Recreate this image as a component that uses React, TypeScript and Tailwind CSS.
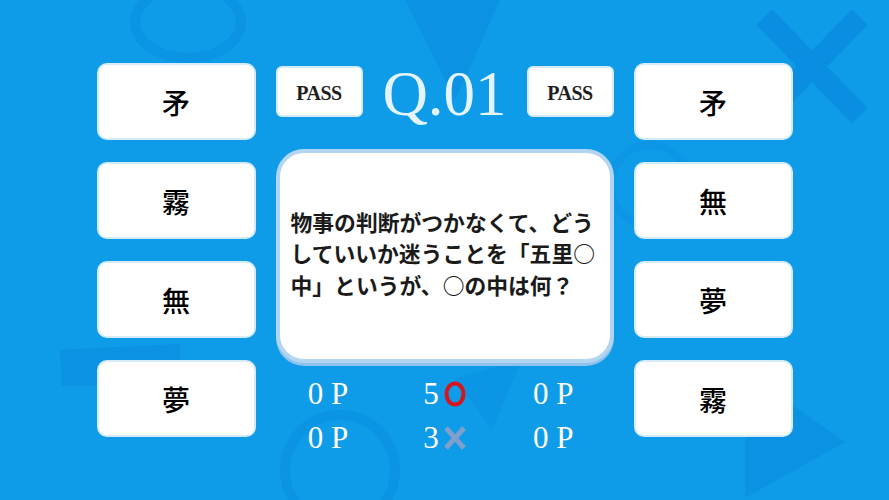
import React from "react";

const FONT = "font-['Liberation_Serif','Noto_Sans_CJK_JP',serif]";
const CJK = "font-['Noto_Sans_CJK_JP',sans-serif]";
const LEFT = ["矛", "霧", "無", "夢"];
const RIGHT = ["矛", "無", "夢", "霧"];
const QUESTION = [
  "物事の判断がつかなくて、どう",
  "していいか迷うことを「五里○",
  "中」というが、○の中は何？",
];

function Backdrop() {
  return (
    <svg
      className="absolute inset-0 h-full w-full"
      viewBox="0 0 889 500"
      aria-hidden
    >
      <ellipse cx="188" cy="22" rx="53" ry="36" fill="none" stroke="#0b93e4" strokeWidth="10" />
      <polygon points="405,0 500,0 455,100" fill="#0b92e3" />
      <g stroke="#0a8ee1" strokeWidth="22" strokeLinecap="square">
        <line x1="772" y1="25" x2="852" y2="108" />
        <line x1="852" y1="25" x2="772" y2="108" />
      </g>
      <circle cx="340" cy="470" r="55" fill="none" stroke="#0b93e4" strokeWidth="10" />
      <polygon points="745,372 845,442 745,498" fill="#0b92e3" />
      <polygon points="60,350 180,344 180,386 62,386" fill="#0b92e3" />
      <polygon points="455,378 522,360 492,430" fill="#0c95e5" />
      <circle cx="650" cy="185" r="40" fill="none" stroke="#0c96e5" strokeWidth="8" />
    </svg>
  );
}

function AnswerCard({ label }: { label: string }) {
  return (
    <div className="flex h-[77px] w-[159px] items-center justify-center rounded-[10px] border-2 border-[#d6ebf9] bg-white">
      <span className={`${CJK} text-[28px] font-medium leading-none text-black`}>{label}</span>
    </div>
  );
}

function PassButton() {
  return (
    <div className="flex h-[51px] w-[87px] items-center justify-center rounded-[6px] border-2 border-[#d6ebf9] bg-white">
      <span className="pt-[3px] text-[20px] font-bold tracking-tight text-[#1e1e1e]">PASS</span>
    </div>
  );
}

function Ring() {
  return (
    <svg width="22" height="26" viewBox="0 0 22 26" aria-hidden>
      <ellipse cx="11" cy="13" rx="8.5" ry="10.5" fill="none" stroke="#d8141c" strokeWidth="4" />
    </svg>
  );
}

function Cross() {
  return (
    <svg width="22" height="26" viewBox="0 0 22 26" aria-hidden>
      <g stroke="#7f9fcc" strokeWidth="5">
        <line x1="2" y1="3" x2="20" y2="23" />
        <line x1="20" y1="3" x2="2" y2="23" />
      </g>
    </svg>
  );
}

function Score({ children }: { children: React.ReactNode }) {
  return (
    <div className="flex items-center justify-center text-[31px] leading-none tracking-[0.25em] text-white">
      {children}
    </div>
  );
}

export default function App() {
  return (
    <div className={`relative h-[500px] w-[889px] overflow-hidden bg-[#0e9be8] ${FONT}`}>
      <Backdrop />
      <div className="relative flex justify-center gap-[20px] pt-[63px]">
        <div className="flex flex-col gap-[22px]">
          {LEFT.map((k, i) => (
            <AnswerCard key={i} label={k} />
          ))}
        </div>

        <div className="flex w-[338px] flex-col">
          <div className="flex items-center justify-between">
            <PassButton />
            <span className="pt-[6px] text-[63px] leading-[51px] text-[#e4f4fc]">Q.01</span>
            <PassButton />
          </div>

          <div className="mt-[29px] flex h-[214px] flex-col justify-center rounded-[28px] border-4 border-[#b2d5f1] bg-white pb-[6px] pl-[11px] shadow-[0_3px_0_#8fc2ec]">
            {QUESTION.map((line, i) => (
              <p key={i} className={`${CJK} whitespace-nowrap text-[21.8px] font-bold leading-[31.5px] text-[#1a1a1a]`}>
                {line}
              </p>
            ))}
          </div>

          <div className="mt-[15px] grid grid-cols-3 gap-y-[13px]">
            <Score>0P</Score>
            <Score>
              <span className="tracking-normal">5</span>
              <span className="ml-[5px]">
                <Ring />
              </span>
            </Score>
            <Score>0P</Score>
            <Score>0P</Score>
            <Score>
              <span className="tracking-normal">3</span>
              <span className="ml-[5px]">
                <Cross />
              </span>
            </Score>
            <Score>0P</Score>
          </div>
        </div>

        <div className="flex flex-col gap-[22px]">
          {RIGHT.map((k, i) => (
            <AnswerCard key={i} label={k} />
          ))}
        </div>
      </div>
    </div>
  );
}
